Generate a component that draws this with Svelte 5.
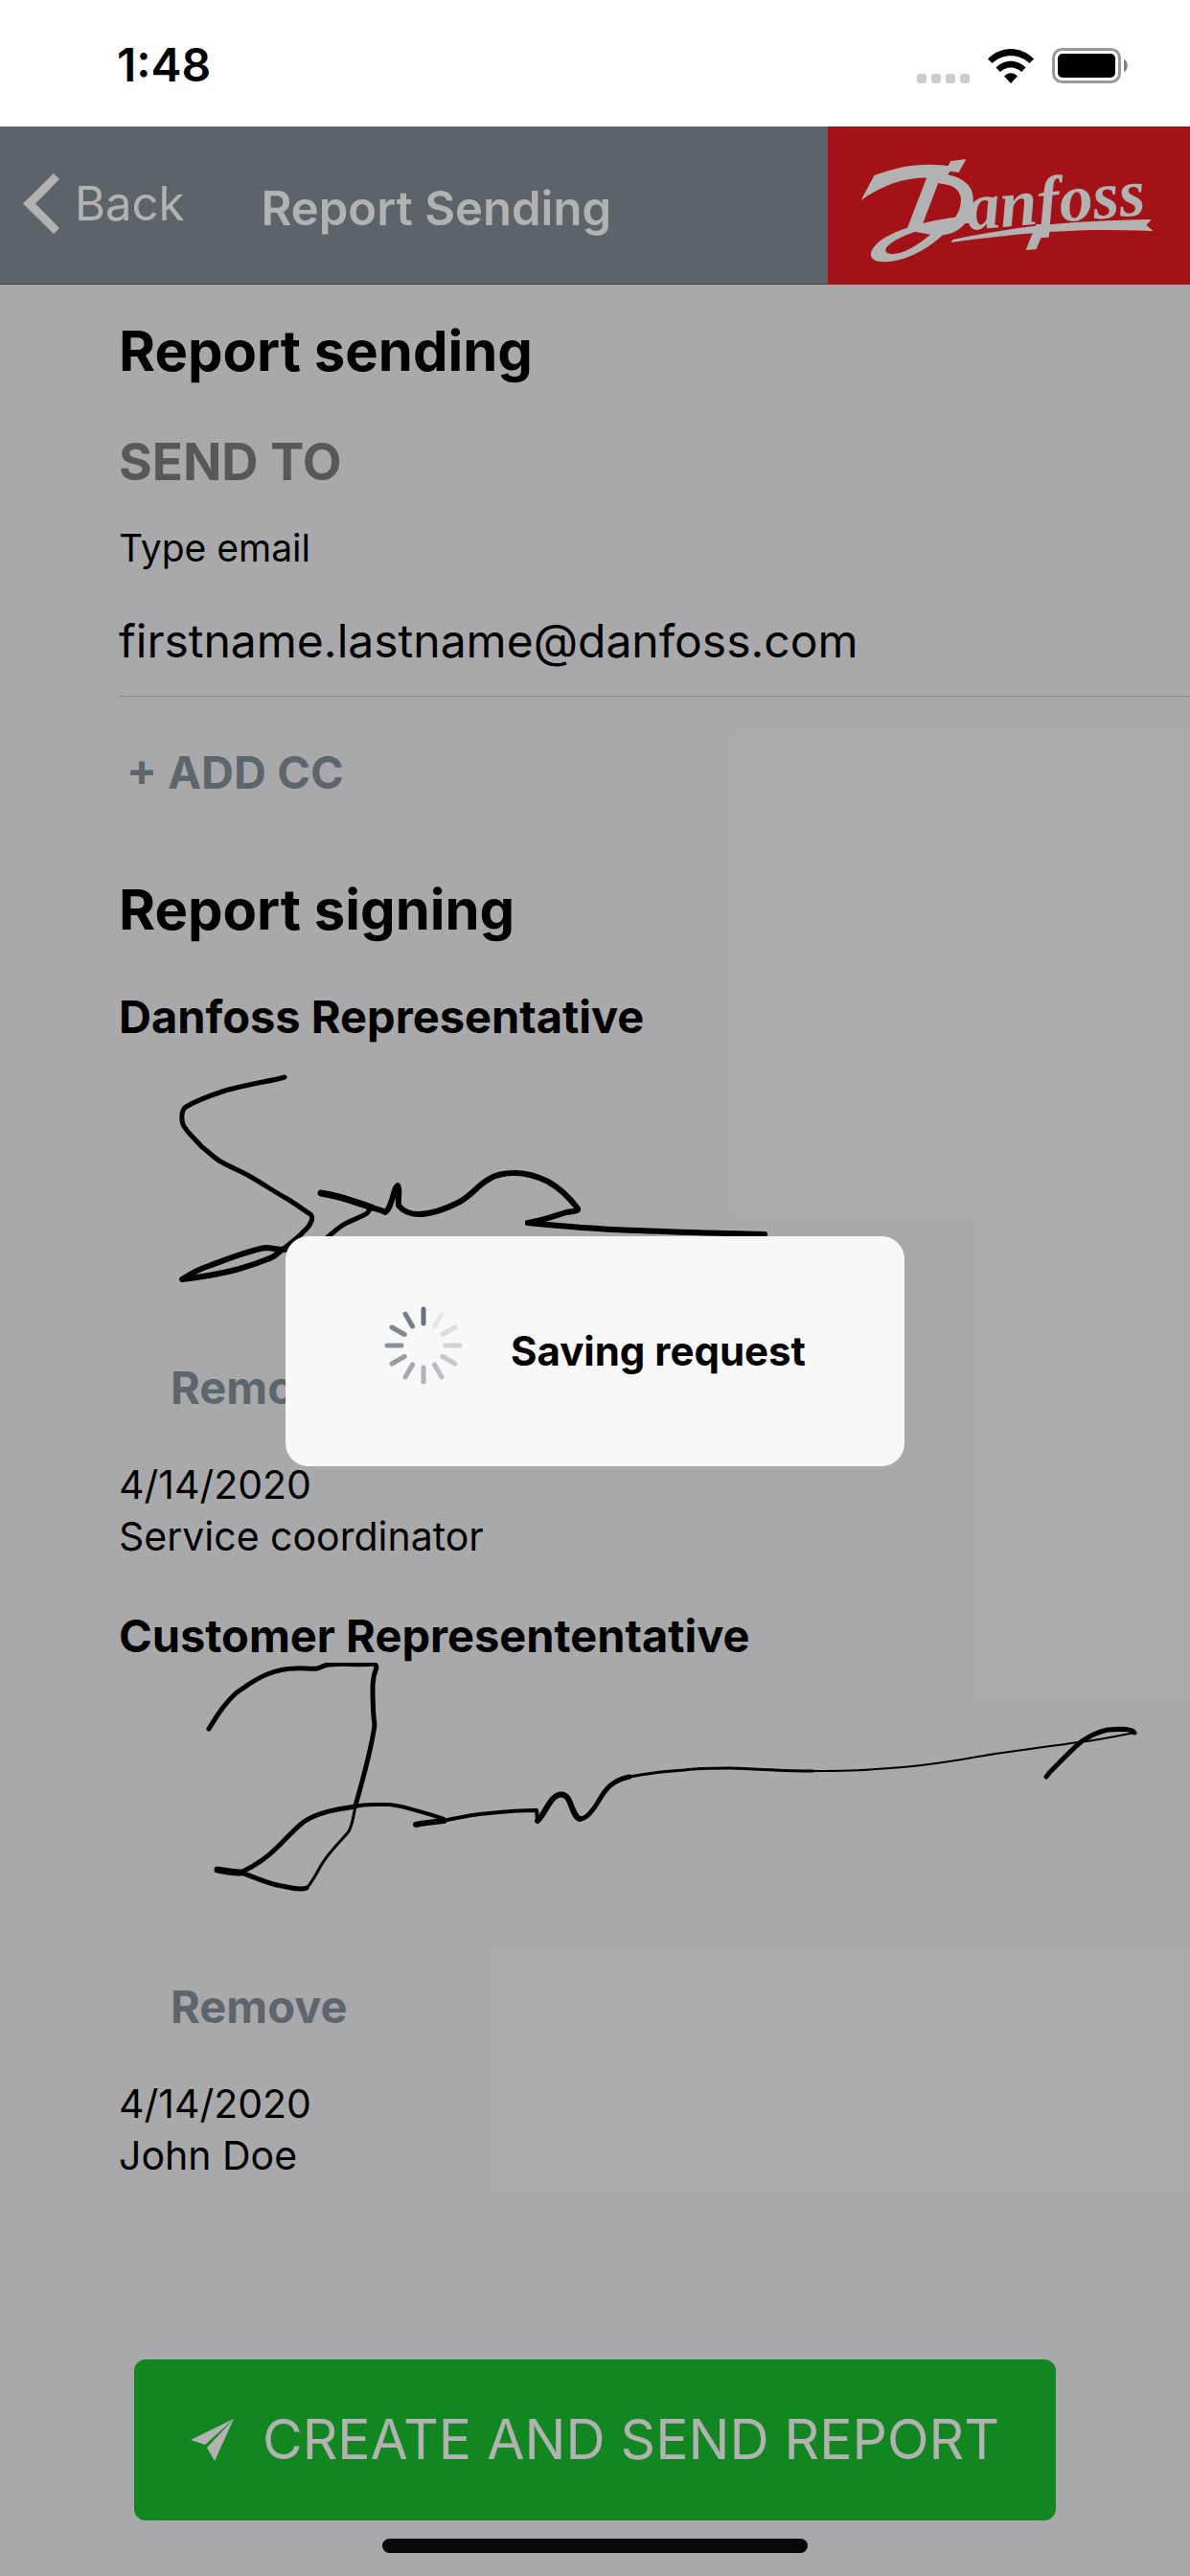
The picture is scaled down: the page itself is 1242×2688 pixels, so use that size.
<!--
  App.svelte: the "Report Sending" screen.
  The saving dialog lies over the form while the request is running.
-->
<script>
  let email = $state("firstname.lastname@danfoss.com");
  let saving = $state(true);

  const signers = [
    {
      title: "Danfoss Representative",
      date: "4/14/2020",
      name: "Service coordinator",
      strokes: [
        { width: 5, d: "M173 35C160 39 130 43 108 50C93 55 80 60 70 66C65 69 64 83 70 89C73 94 80 100 87 108C94 113 100 120 108 124C117 129 127 133 136 138C150 146 160 153 174 161C183 166 192 173 200 178C204 182 200 190 193 196C187 203 178 209 169 216" },
        { width: 6, d: "M169 216C165 219 163 223 155 225C145 229 130 234 118 237C102 241 82 244 66 246C75 240 84 235 94 232C113 225 138 215 153 213C160 213 165 215 172 215" },
        { width: 5, d: "M172 215C190 216 208 211 219 201C225 196 230 191 238 187C246 183 255 180 259 177C263 174 261 173 260 171" },
        { width: 7, d: "M211 156C222 158 232 160 240 163C249 166 256 168 264 171" },
        { width: 6, d: "M264 171C269 173 273 173 278 176C283 172 283 168 285 163C287 158 288 149 291 148C294 151 291 161 292 169C296 174 303 178 313 178C327 178 342 172 354 166C368 159 374 148 387 141C395 136 404 135 413 135C427 135 438 139 448 144C461 151 472 163 479 172C480 175 474 175 467 176C454 180 441 185 427 187" },
        { width: 6, d: "M427 187C460 190 500 194 542 195C590 197 630 198 674 199" },
      ],
    },
    {
      title: "Customer Represententative",
      date: "4/14/2020",
      name: "John Doe",
      strokes: [
        { width: 5, d: "M94 69C102 56 110 43 122 32C132 25 142 17 155 12C165 8 174 6 184 6C192 5 199 7 207 6C213 5 215 1 221 2C236 0 250 3 266 1C270 3 269 6 268 8C265 15 266 18 265 23C265 36 265 52 267 65C263 94 255 120 247 149" },
        { width: 3, d: "M247 149C245 160 244 169 240 176C232 186 220 197 212 210C206 220 202 229 196 235" },
        { width: 5, d: "M196 235C190 238 177 234 165 232C152 229 140 223 127 219" },
        { width: 7, d: "M103 216C110 217 118 219 127 219" },
        { width: 5, d: "M127 219C140 213 154 204 165 193C174 184 183 174 193 166C208 156 227 153 247 150" },
        { width: 4, d: "M247 150C256 147 267 148 278 148C287 148 296 150 306 153C317 156 328 159 339 163" },
        { width: 6, d: "M310 169C320 167 330 166 339 165" },
        { width: 4, d: "M339 165C357 161 371 158 387 157C405 155 420 154 436 154L437 165" },
        { width: 6, d: "M437 165C444 158 446 150 453 142C459 136 465 136 469 142C473 149 475 161 481 163" },
        { width: 5, d: "M481 163C487 163 491 158 495 153C502 144 507 130 519 124C524 121 528 120 533 119" },
        { width: 3, d: "M533 119C550 116 570 113 590 112C605 110 620 110 637 110C670 111 695 113 725 113" },
        { width: 2, d: "M725 113C750 113 770 113 790 111C812 110 832 108 853 105C876 102 900 97 922 94C948 90 975 87 1001 83C1022 81 1044 76 1060 73" },
        { width: 5, d: "M1060 73C1058 69 1043 69 1032 70C1022 72 1014 76 1005 82C995 90 984 102 974 112C971 114 970 117 968 119" },
      ],
    },
  ];

  // Spinner blades, darkest at twelve o'clock and fading counterclockwise
  const blades = Array.from({ length: 12 }, (_, i) => ({
    angle: -30 * i,
    opacity: 1 - i * 0.08,
  }));

  function removeSignature(signer) {
    console.log("remove", signer.title);
  }

  function sendReport() {
    saving = true;
  }
</script>

<div class="screen">
  <div class="status-bar">
    <span class="time">1:48</span>
    <div class="status-icons">
      <div class="signal"><i></i><i></i><i></i><i></i></div>
      <svg class="wifi" width="48" height="36" viewBox="0 0 48 36" aria-hidden="true">
        <path d="M0 10.500C13.500 -3.500 34.500 -3.500 48 10.500L43.500 15C32.500 4.500 15.500 4.500 4.500 15Z" />
        <path d="M8.500 19.500C17 10.500 31 10.500 39.500 19.500L35 24C29 18 19 18 13 24Z" />
        <path d="M17 28.500C21 24 27 24 31 28.500L24 36Z" />
      </svg>
      <svg width="80" height="37" viewBox="0 0 80 37" aria-hidden="true">
        <rect x="1.500" y="1.500" width="69" height="34" rx="9" fill="none" stroke="#999" stroke-width="3" />
        <rect x="6" y="6" width="60" height="25" rx="5" />
        <path d="M75 12C80 14 80 23 75 25Z" fill="#808080" />
      </svg>
    </div>
  </div>

  <div class="app">
    <header>
      <button class="back">
        <svg width="38" height="63" viewBox="0 0 38 63" aria-hidden="true">
          <path d="M32 0L38 6L13 31.500L38 57L32 63L0 31.500Z" fill="currentColor" />
        </svg>
        Back
      </button>
      <div class="nav-title">Report Sending</div>
      <svg class="logo" viewBox="0 0 377 165" role="img" aria-label="Danfoss">
        <path d="M34 77L48 51C76 40 104 37 130 42L122 55C90 50 62 57 34 77Z" />
        <path d="M122 46L128 36L144 34L136 48Z" />
        <path d="M149 93C112 96 72 105 52 121C38 134 44 143 63 141C84 139 106 127 124 109L114 106C98 121 82 132 68 133C57 133 57 127 68 120C88 108 118 101 147 101Z" />
        <path d="M128 121L130 118C177 108 229 101 276 99C296 98 317 97 337 97L332 103L339 109C318 108 297 108 276 108C229 109 177 114 128 121Z" />
        <path d="M217 102L228 102L217 128L206 129Z" />
        <text class="logo-initial" transform="translate(80 108) rotate(10)">D</text>
        <text transform="translate(146 108) rotate(-5)">anfoss</text>
      </svg>
    </header>

    <main>
      <h1>Report sending</h1>
      <h2 class="send-to">SEND TO</h2>
      <label for="email">Type email</label>
      <input id="email" type="email" bind:value={email} />
      <button class="link add-cc">+ ADD CC</button>

      <h1>Report signing</h1>
      {#each signers as signer}
        <section>
          <h3>{signer.title}</h3>
          <svg class="signature" width="1118" height="331" viewBox="0 0 1118 331" role="img" aria-label="Signature">
            {#each signer.strokes as stroke}
              <path d={stroke.d} stroke-width={stroke.width} />
            {/each}
          </svg>
          <button class="link remove" onclick={() => removeSignature(signer)}>Remove</button>
          <p>{signer.date}</p>
          <p>{signer.name}</p>
        </section>
      {/each}
    </main>

    <footer>
      <button class="send" onclick={sendReport}>
        <svg width="45" height="44" viewBox="0 0 45 44" aria-hidden="true">
          <path d="M0 22L45 0L15 27ZM45 0L25 44L17 30Z" fill="currentColor" />
        </svg>
        CREATE AND SEND REPORT
      </button>
    </footer>

    {#if saving}
      <div class="overlay">
        <div class="dialog" role="alertdialog" aria-labelledby="saving-text">
          <svg class="spinner" width="82" height="82" viewBox="-41 -41 82 82" aria-hidden="true">
            {#each blades as blade}
              <line y1="-38" y2="-23" transform="rotate({blade.angle})" stroke-opacity={blade.opacity} />
            {/each}
          </svg>
          <span id="saving-text">Saving request</span>
        </div>
      </div>
    {/if}
    <div class="home-indicator"></div>
  </div>
</div>

<style>
  :global(body) {
    margin: 0;
    background: #fff;
  }

  .screen {
    display: flex;
    flex-direction: column;
    min-height: 100vh;
    font-family: Inter, "Liberation Sans", sans-serif;
    color: #000;
  }

  button {
    border: none;
    padding: 0;
    background: none;
    font: inherit;
    cursor: pointer;
  }

  /* Status bar */
  .status-bar {
    display: flex;
    align-items: center;
    justify-content: space-between;
    box-sizing: border-box;
    height: 132px;
    padding: 4px 64px 0 122px;
  }

  .time {
    font-size: 48px;
    font-weight: 600;
    line-height: 60px;
  }

  .status-icons {
    display: flex;
    align-items: flex-end;
  }

  .signal {
    display: flex;
    gap: 5px;
  }

  .signal i {
    width: 10px;
    height: 10px;
    border-radius: 3px;
    background: #ccc;
  }

  .wifi {
    margin: 0 19px;
  }

  /* Everything below the status bar gets dimmed by the overlay */
  .app {
    position: relative;
    display: flex;
    flex: 1;
    flex-direction: column;
    background: #f2f3f5;
  }

  header {
    display: flex;
    align-items: center;
    height: 165px;
    background: #858f97;
    box-shadow: inset 0 -1px #5c6368;
    color: #fff;
    font-size: 49px;
    line-height: 64px;
  }

  .back {
    display: flex;
    align-items: center;
    gap: 16px;
    margin-left: 24px;
    padding-bottom: 4px;
    color: #fff;
  }

  .nav-title {
    flex: 1;
    margin-left: 80px;
    padding-top: 6px;
    font-weight: 600;
  }

  .logo {
    width: 378px;
    height: 165px;
    background: #e91b22;
    fill: #fff;
  }

  .logo text {
    font: italic bold 70px "Liberation Serif", serif;
  }

  .logo .logo-initial {
    font: italic bold 94px "Liberation Sans", sans-serif;
  }

  /* Form */
  main {
    display: flex;
    flex-direction: column;
    align-items: flex-start;
    padding: 33px 0 48px 124px;
  }

  h1 {
    margin: 0 0 48px;
    font-size: 58px;
    font-weight: 700;
    line-height: 72px;
  }

  .send-to {
    margin: 0 0 30px;
    color: #7f7f7f;
    font-size: 53px;
    font-weight: 700;
    line-height: 64px;
  }

  label {
    font-size: 39px;
    line-height: 56px;
  }

  input {
    align-self: stretch;
    height: 64px;
    margin: 36px 0 51px;
    padding: 0 0 26px;
    border: none;
    border-bottom: 1px solid #c8c8ca;
    border-radius: 0;
    outline: none;
    background: transparent;
    color: #000;
    font: 48px Inter, "Liberation Sans", sans-serif;
  }

  .link {
    color: #86939c;
    font-size: 47px;
    font-weight: 700;
    line-height: 56px;
  }

  .add-cc {
    margin: 0 0 79px 8px;
  }

  section {
    display: flex;
    flex-direction: column;
    align-items: flex-start;
    align-self: stretch;
    margin-bottom: 49px;
  }

  h3 {
    margin: 0;
    font-size: 47px;
    font-weight: 700;
    line-height: 56px;
  }

  .signature {
    max-width: 100%;
    fill: none;
    stroke: #000;
    stroke-linecap: round;
    stroke-linejoin: round;
  }

  .remove {
    margin: 0 0 46px 54px;
  }

  p {
    margin: 0;
    font-size: 41px;
    line-height: 54px;
  }

  footer {
    margin-top: auto;
    padding: 0 140px 58px;
  }

  .send {
    display: flex;
    align-items: center;
    justify-content: center;
    gap: 30px;
    width: 100%;
    height: 168px;
    border-radius: 12px;
    background: #1ac230;
    color: #fff;
    font-size: 57px;
    line-height: 72px;
    white-space: nowrap;
  }

  /* Saving dialog */
  .overlay {
    position: absolute;
    inset: 0;
    display: flex;
    align-items: center;
    justify-content: center;
    background: rgba(0, 0, 0, 0.3);
  }

  .dialog {
    display: flex;
    align-items: center;
    justify-content: center;
    gap: 50px;
    box-sizing: border-box;
    min-width: 52%;
    height: 240px;
    padding: 0 64px;
    border-radius: 24px;
    background: #f8f8f8;
    font-size: 42px;
    font-weight: 700;
    line-height: 56px;
  }

  .spinner {
    padding-bottom: 12px;
    stroke: #697180;
    stroke-width: 5;
    stroke-linecap: round;
  }

  .home-indicator {
    position: absolute;
    bottom: 24px;
    left: 50%;
    width: 444px;
    height: 15px;
    border-radius: 8px;
    background: #080808;
    transform: translateX(-50%);
  }
</style>
